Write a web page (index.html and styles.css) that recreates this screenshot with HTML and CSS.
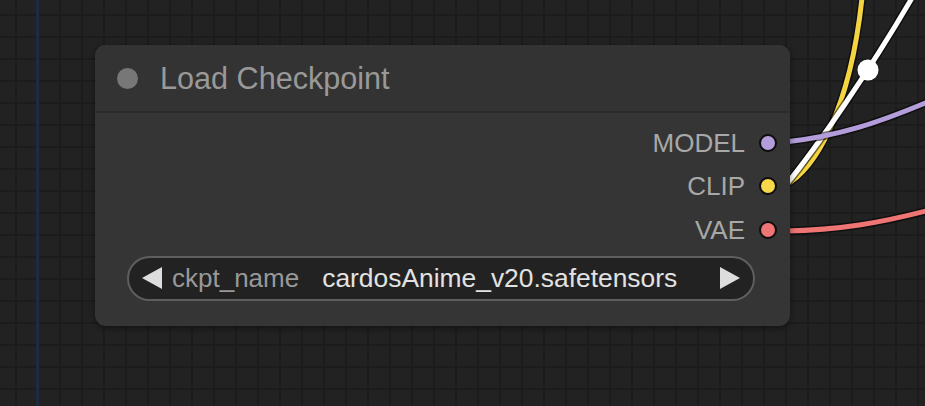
FILE: index.html
```html
<!DOCTYPE html>
<html>
<head>
<meta charset="utf-8">
<link rel="stylesheet" href="styles.css">
</head>
<body>
<div class="canvas">
  <div class="group-line"></div>
  <svg class="wires" width="925" height="406" viewBox="0 0 925 406">
    <g fill="none" stroke-linecap="round">
      <path class="edge" d="M785 185 C815 170 850 110 862 -2"/>
      <path d="M785 185 C815 170 850 110 862 -2" stroke="#f5d442" stroke-width="5"/>
      <path class="edge" d="M785 186 C815 150 870 70 912 -2"/>
      <path d="M785 186 C815 150 870 70 912 -2" stroke="#ffffff" stroke-width="5"/>
      <path class="edge" d="M785 142 C840 136 880 122 930 101"/>
      <path d="M785 142 C840 136 880 122 930 101" stroke="#b39ddb" stroke-width="5"/>
      <path class="edge" d="M785 231 C840 230 880 223 930 210"/>
      <path d="M785 231 C840 230 880 223 930 210" stroke="#ef7474" stroke-width="5"/>
    </g>
    <circle cx="868" cy="70" r="10.5" fill="#ffffff"/>
  </svg>

  <div class="node">
    <div class="node-title">
      <span class="title-dot"></span>
      <span class="title-text">Load Checkpoint</span>
    </div>
    <div class="node-body">
      <div class="outputs">
        <div class="output"><span class="out-label">MODEL</span><span class="slot slot-model"></span></div>
        <div class="output"><span class="out-label">CLIP</span><span class="slot slot-clip"></span></div>
        <div class="output"><span class="out-label">VAE</span><span class="slot slot-vae"></span></div>
      </div>
      <div class="widget">
        <svg class="arrow" width="20" height="22" viewBox="0 0 20 22"><polygon points="20,0 20,22 0,11" fill="#dddddd"/></svg>
        <span class="w-label">ckpt_name</span>
        <span class="w-value">cardosAnime_v20.safetensors</span>
        <span class="w-spacer"></span>
        <svg class="arrow" width="20" height="22" viewBox="0 0 20 22"><polygon points="0,0 0,22 20,11" fill="#dddddd"/></svg>
      </div>
    </div>
  </div>
</div>
</body>
</html>
```

FILE: styles.css
```css
* { box-sizing: border-box; }
html, body {
  margin: 0;
  padding: 0;
  width: 925px;
  height: 406px;
  overflow: hidden;
  font-family: "Liberation Sans", Arial, sans-serif;
}
.canvas {
  position: relative;
  width: 925px;
  height: 406px;
  background-color: #222222;
  background-image:
    linear-gradient(to right, #1c1c1c 0, #1c1c1c 2px, transparent 2px),
    linear-gradient(to bottom, #1c1c1c 0, #1c1c1c 2px, transparent 2px);
  background-size: 22px 22px;
  background-position: 15px 14px;
  overflow: hidden;
}
.group-line {
  position: absolute;
  left: 36px;
  top: 0;
  width: 3px;
  height: 406px;
  background: #1f2a42;
}
.wires {
  position: absolute;
  left: 0;
  top: 0;
}
.wires .edge {
  stroke: rgba(0, 0, 0, 0.55);
  stroke-width: 8;
}
.node {
  position: absolute;
  left: 95px;
  top: 45px;
  width: 695px;
  height: 281px;
  background: #353535;
  border-radius: 11px;
  box-shadow: 0 2px 6px rgba(0, 0, 0, 0.45);
  display: flex;
  flex-direction: column;
}
.node-title {
  height: 68px;
  border-bottom: 2px solid #2b2b2b;
  display: flex;
  align-items: center;
  padding-left: 22px;
  gap: 22px;
  background: #333333;
  border-radius: 11px 11px 0 0;
}
.title-dot {
  width: 21px;
  height: 21px;
  border-radius: 50%;
  background: #777777;
  flex: none;
}
.title-text {
  color: #999999;
  font-size: 30.6px;
  line-height: 1;
  padding-top: 1px;
}
.node-body {
  display: flex;
  flex-direction: column;
  padding-top: 8px;
}
.outputs {
  display: flex;
  flex-direction: column;
  align-items: flex-end;
  padding-right: 13px;
}
.output {
  height: 43.5px;
  display: flex;
  align-items: center;
  gap: 14px;
}
.out-label {
  color: #a8a8a8;
  font-size: 26px;
  line-height: 1;
}
.slot {
  width: 18px;
  height: 18px;
  border-radius: 50%;
  border: 2px solid #0d0d0d;
  flex: none;
}
.slot-model { background: #b39ddb; }
.slot-clip { background: #f7d84b; }
.slot-vae { background: #ef7474; }
.widget {
  margin: 4px 35px 0 32px;
  height: 45px;
  border: 2px solid #5e5e5e;
  border-radius: 23px;
  background: #222222;
  display: flex;
  align-items: center;
  padding: 0 13px;
}
.arrow { flex: none; }
.w-label {
  color: #999999;
  font-size: 26px;
  margin-left: 10px;
  line-height: 1;
}
.w-value {
  color: #e2e2e2;
  font-size: 26.4px;
  margin-left: 23px;
  line-height: 1;
}
.w-spacer { flex: 1; }
```
